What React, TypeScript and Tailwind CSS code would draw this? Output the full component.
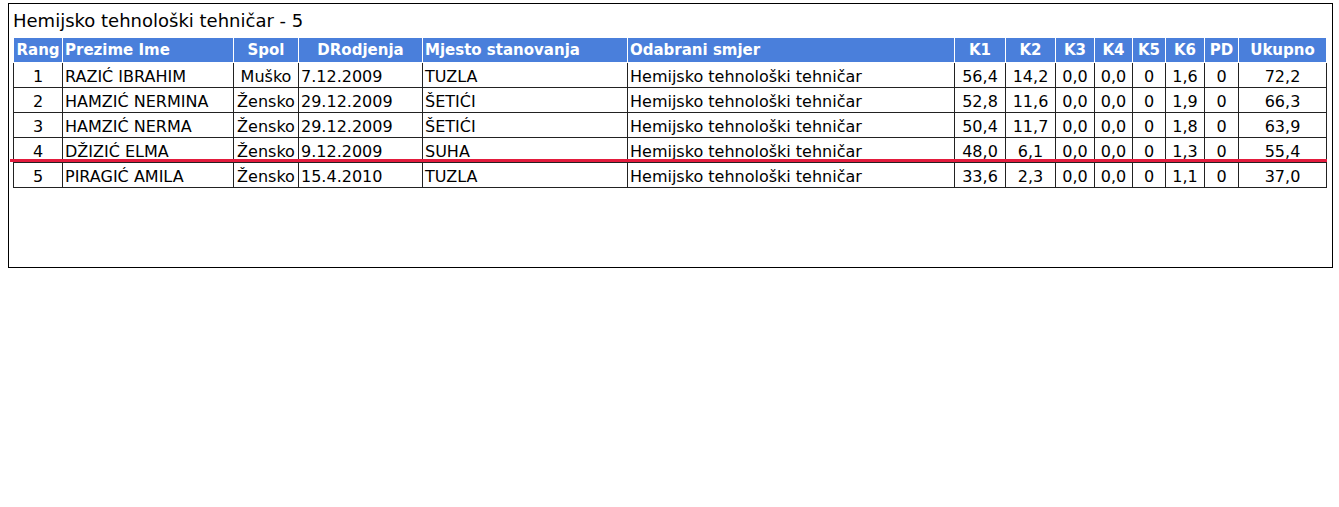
import React from 'react'

type Row = {
  rang: number
  ime: string
  spol: string
  datum: string
  mjesto: string
  smjer: string
  k: string[]
  ukupno: string
}

const ROWS: Row[] = [
  { rang: 1, ime: 'RAZIĆ IBRAHIM', spol: 'Muško', datum: '7.12.2009', mjesto: 'TUZLA', smjer: 'Hemijsko tehnološki tehničar', k: ['56,4', '14,2', '0,0', '0,0', '0', '1,6', '0'], ukupno: '72,2' },
  { rang: 2, ime: 'HAMZIĆ NERMINA', spol: 'Žensko', datum: '29.12.2009', mjesto: 'ŠETIĆI', smjer: 'Hemijsko tehnološki tehničar', k: ['52,8', '11,6', '0,0', '0,0', '0', '1,9', '0'], ukupno: '66,3' },
  { rang: 3, ime: 'HAMZIĆ NERMA', spol: 'Žensko', datum: '29.12.2009', mjesto: 'ŠETIĆI', smjer: 'Hemijsko tehnološki tehničar', k: ['50,4', '11,7', '0,0', '0,0', '0', '1,8', '0'], ukupno: '63,9' },
  { rang: 4, ime: 'DŽIZIĆ ELMA', spol: 'Žensko', datum: '9.12.2009', mjesto: 'SUHA', smjer: 'Hemijsko tehnološki tehničar', k: ['48,0', '6,1', '0,0', '0,0', '0', '1,3', '0'], ukupno: '55,4' },
  { rang: 5, ime: 'PIRAGIĆ AMILA', spol: 'Žensko', datum: '15.4.2010', mjesto: 'TUZLA', smjer: 'Hemijsko tehnološki tehničar', k: ['33,6', '2,3', '0,0', '0,0', '0', '1,1', '0'], ukupno: '37,0' },
]

// širine kolona u px (zbir = 1313)
const COLS = [49, 171, 65, 124, 205, 327, 51, 50, 39, 38, 33, 39, 34, 88]

const th = 'border border-white px-[2px] h-[25px] font-bold text-white text-[15px] leading-none'
const td = 'border border-[#222] px-[2px] pt-[4px] pb-0 h-[25px] text-[16px] leading-none text-black'

export default function App() {
  return (
    <div className="relative pt-[3px] pl-[8px] bg-white min-h-[507px]" style={{ fontFamily: '"DejaVu Sans", Verdana, sans-serif' }}>
      <div className="w-[1325px] h-[265px] border border-black pl-[4px]">
        <div className="h-[33px] pt-[5px] text-[18px] leading-[24px] text-black">Hemijsko tehnološki tehničar - 5</div>
        <table className="table-fixed border-collapse w-[1313px]">
          <colgroup>
            {COLS.map((w, i) => (
              <col key={i} style={{ width: w }} />
            ))}
          </colgroup>
          <thead>
            <tr className="bg-[#4a7fdb]">
              <th className={`${th} text-center`}>Rang</th>
              <th className={`${th} text-left`}>Prezime Ime</th>
              <th className={`${th} text-center`}>Spol</th>
              <th className={`${th} text-center`}>DRodjenja</th>
              <th className={`${th} text-left`}>Mjesto stanovanja</th>
              <th className={`${th} text-left`}>Odabrani smjer</th>
              <th className={`${th} text-center`}>K1</th>
              <th className={`${th} text-center`}>K2</th>
              <th className={`${th} text-center`}>K3</th>
              <th className={`${th} text-center`}>K4</th>
              <th className={`${th} text-center`}>K5</th>
              <th className={`${th} text-center`}>K6</th>
              <th className={`${th} text-center`}>PD</th>
              <th className={`${th} text-center`}>Ukupno</th>
            </tr>
          </thead>
          <tbody>
            {ROWS.map(r => (
              <tr key={r.rang}>
                <td className={`${td} text-center`}>{r.rang}</td>
                <td className={`${td} text-left`}>{r.ime}</td>
                <td className={`${td} text-center`}>{r.spol}</td>
                <td className={`${td} text-left`}>{r.datum}</td>
                <td className={`${td} text-left`}>{r.mjesto}</td>
                <td className={`${td} text-left`}>{r.smjer}</td>
                {r.k.map((v, i) => (
                  <td key={i} className={`${td} text-center`}>{v}</td>
                ))}
                <td className={`${td} text-center`}>{r.ukupno}</td>
              </tr>
            ))}
          </tbody>
        </table>
      </div>
      {/* crvena linija ispod 4. reda */}
      <div className="absolute left-[10px] top-[159px] w-[1317px] h-[3px] bg-[#e31b3d]" />
    </div>
  )
}
